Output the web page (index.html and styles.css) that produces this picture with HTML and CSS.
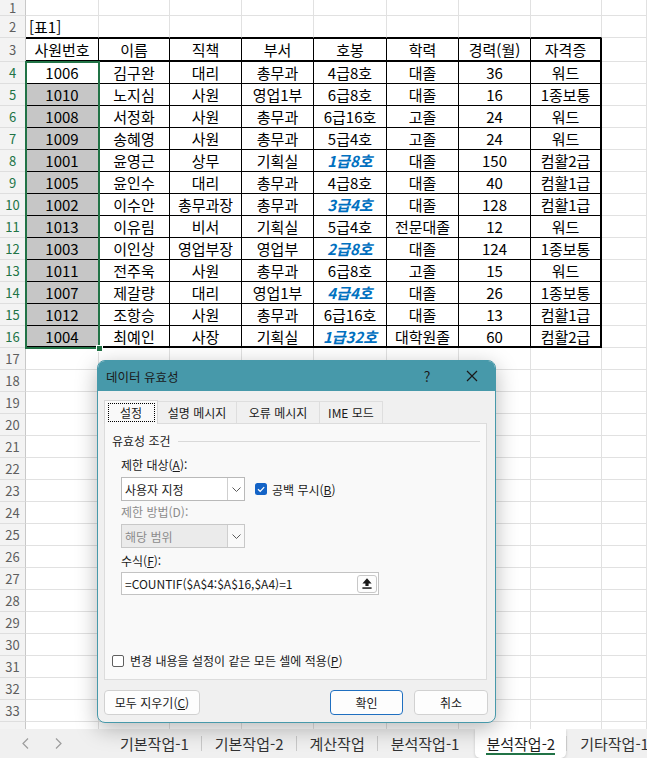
FILE: index.html
```html
<!DOCTYPE html>
<html lang="ko">
<head>
  <meta charset="UTF-8" />
  <meta name="viewport" content="width=device-width, initial-scale=1" />
  <title>데이터 유효성</title>
  <link rel="stylesheet" href="styles.css">
</head>
<body>

  <div class="sheet" id="sheet">
    <div class="selection"><span class="handle"></span></div>
  </div>

  <div class="tabbar">
    <div class="nav">
      <svg width="7" height="11" viewBox="0 0 7 11"><polyline points="6,0.5 1,5.5 6,10.5" /></svg>
      <svg width="7" height="11" viewBox="0 0 7 11"><polyline points="1,0.5 6,5.5 1,10.5" /></svg>
    </div>
    <div class="sheet-tabs">
      <span class="stab">기본작업-1</span>
      <i class="sep"></i>
      <span class="stab">기본작업-2</span>
      <i class="sep"></i>
      <span class="stab">계산작업</span>
      <i class="sep"></i>
      <span class="stab">분석작업-1</span>
      <span class="stab active"><span>분석작업-2</span></span>
      <i class="sep"></i>
      <span class="stab">기타작업-1</span>
    </div>
  </div>

  <div class="dialog">
    <div class="titlebar">
      <span class="title">데이터 유효성</span>
      <span class="help">?</span>
      <span class="close">
        <svg width="12" height="12" viewBox="0 0 12 12"><path d="M1 1 L11 11 M11 1 L1 11" /></svg>
      </span>
    </div>

    <div class="dlg-body">
      <div class="tabs">
        <div class="tab active"><span class="focus">설정</span></div>
        <div class="tab w2">설명 메시지</div>
        <div class="tab w3">오류 메시지</div>
        <div class="tab w4">IME 모드</div>
      </div>

      <div class="panel">
        <div class="group">
          <span>유효성 조건</span>
          <span class="rule"></span>
        </div>

        <div class="fields">
          <div class="label first">제한 대상(<u>A</u>):</div>
          <div class="field-row">
            <div class="combo">
              <span class="value">사용자 지정</span>
              <span class="drop">
                <svg width="9" height="5" viewBox="0 0 9 5"><polyline points="0.5,0.5 4.5,4.5 8.5,0.5" /></svg>
              </span>
            </div>
            <div class="check">
              <svg width="12" height="12" viewBox="0 0 12 12">
                <rect x="0" y="0" width="12" height="12" rx="2.5" fill="#1363c6" />
                <polyline points="3,6.3 5.2,8.4 9.2,4.1" fill="none" stroke="#fff" stroke-width="1.3" />
              </svg>
              <span>공백 무시(<u>B</u>)</span>
            </div>
          </div>

          <div class="label disabled">제한 방법(D):</div>
          <div class="combo off">
            <span class="value">해당 범위</span>
            <span class="drop">
              <svg width="9" height="5" viewBox="0 0 9 5"><polyline points="0.5,0.5 4.5,4.5 8.5,0.5" /></svg>
            </span>
          </div>

          <div class="label third">수식(<u>F</u>):</div>
          <div class="formula">
            <span class="value">=COUNTIF($A$4:$A$16,$A4)=1</span>
            <span class="ref-btn">
              <svg width="10" height="11" viewBox="0 0 10 11">
                <path d="M5 0.3 L9.6 5.4 H6.6 V8 H3.4 V5.4 H0.4 Z" fill="#1a1a1a" />
                <rect x="0.4" y="9.3" width="9.2" height="1.5" fill="#1a1a1a" />
              </svg>
            </span>
          </div>
        </div>

        <div class="apply">
          <span class="box"></span>
          <span>변경 내용을 설정이 같은 모든 셀에 적용(<u>P</u>)</span>
        </div>
      </div>

      <div class="buttons">
        <button class="btn clear">모두 지우기(<u>C</u>)</button>
        <button class="btn ok">확인</button>
        <button class="btn cancel">취소</button>
      </div>
    </div>
  </div>

  <script>
    const sheet = document.getElementById("sheet");
    const head = ["사원번호", "이름", "직책", "부서", "호봉", "학력", "경력(월)", "자격증"];
    const data = [
      ["1006", "김구완", "대리", "총무과", "4급8호", "대졸", "36", "워드"],
      ["1010", "노지심", "사원", "영업1부", "6급8호", "대졸", "16", "1종보통"],
      ["1008", "서정화", "사원", "총무과", "6급16호", "고졸", "24", "워드"],
      ["1009", "송혜영", "사원", "총무과", "5급4호", "고졸", "24", "워드"],
      ["1001", "윤영근", "상무", "기획실", "1급8호", "대졸", "150", "컴활2급"],
      ["1005", "윤인수", "대리", "총무과", "4급8호", "대졸", "40", "컴활1급"],
      ["1002", "이수안", "총무과장", "총무과", "3급4호", "대졸", "128", "컴활1급"],
      ["1013", "이유림", "비서", "기획실", "5급4호", "전문대졸", "12", "워드"],
      ["1003", "이인상", "영업부장", "영업부", "2급8호", "대졸", "124", "1종보통"],
      ["1011", "전주욱", "사원", "총무과", "6급8호", "고졸", "15", "워드"],
      ["1007", "제갈량", "대리", "영업1부", "4급4호", "대졸", "26", "1종보통"],
      ["1012", "조항승", "사원", "총무과", "6급16호", "대졸", "13", "컴활1급"],
      ["1004", "최예인", "사장", "기획실", "1급32호", "대학원졸", "60", "컴활2급"]
    ];
    const blueRows = [8, 10, 12, 14, 16];

    function addCell(cls, text) {
      const div = document.createElement("div");
      div.className = cls;
      div.textContent = text;
      sheet.appendChild(div);
    }

    // row 34 only peeks out under the sheet tabs, so no label
    for (let r = 1; r <= 34; r++) {
      addCell(r >= 4 && r <= 16 ? "rh on" : "rh", r < 34 ? r : "");

      for (let c = 0; c < 9; c++) {
        let cls = "c";
        let text = "";

        if (c < 8) {
          if (r === 2) {
            cls += " above";
            if (c === 0) {
              cls += " left";
              text = "[표1]";
            }
          }
          if (r === 3) {
            cls += " t th";
            text = head[c];
          }
          if (r >= 4 && r <= 16) {
            cls += " t";
            text = data[r - 4][c];
            if (c === 0 && r > 4) cls += " sel";
            if (c === 4 && blueRows.includes(r)) cls += " blue";
            if (r === 16) cls += " bottom";
          }
          if (c === 7 && r >= 3 && r <= 16) cls += " last";
        }

        addCell(cls, text);
      }
    }
  </script>
</body>
</html>
```

FILE: styles.css
```css
* {
  box-sizing: border-box;
}

body {
  margin: 0;
  width: 647px;
  height: 758px;
  overflow: hidden;
  font-family: "Noto Sans CJK KR", "Noto Sans", sans-serif;
  color: #000;
  background: #fff;
  position: relative;
}

/* ---- worksheet ---- */

.sheet {
  position: relative;
  height: 729px;
  overflow: hidden;
  display: grid;
  grid-template-columns: 26px 73px 71px 72px 72px 73px 72px 72px 71px 1fr;
  grid-template-rows: 16px 22px 24px repeat(31, 22px);
}

.c,
.rh {
  display: flex;
  align-items: center;
  justify-content: center;
  white-space: nowrap;
  line-height: 1;
}

.c {
  border-right: 1px solid #e1e1e1;
  border-bottom: 1px solid #e1e1e1;
  font-size: 15px;
  overflow: hidden;
}

.rh {
  background: #f3f3f3;
  border-right: 1px solid #c8c8c8;
  border-bottom: 1px solid #dedede;
  font-size: 13px;
  color: #5e5e5e;
}

.rh.on {
  color: #217346;
}

.c.left {
  justify-content: flex-start;
  padding-left: 3px;
}

.c.above {
  border-bottom-color: #000;
}

.c.t {
  border-right-color: #000;
  border-bottom-color: #000;
}

.c.th {
  border-top: 1px solid #000;
  border-bottom-width: 2px;
}

.c.last {
  border-right-width: 2px;
}

.c.bottom {
  border-bottom-width: 2px;
}

.c.sel {
  background: #c6c6c6;
}

.c.blue {
  color: #0070c0;
  font-weight: bold;
  font-style: italic;
}

.selection {
  position: absolute;
  left: 25px;
  top: 61px;
  width: 75px;
  height: 288px;
  border: 2px solid #217346;
  z-index: 2;
}

.handle {
  position: absolute;
  right: -5px;
  bottom: -5px;
  width: 7px;
  height: 7px;
  background: #217346;
  border: 1px solid #fff;
}

/* ---- sheet tabs ---- */

.tabbar {
  height: 29px;
  display: flex;
  overflow: hidden;
  background: #f0f0f0;
}

.nav {
  flex: none;
  width: 107px;
  display: flex;
  align-items: center;
  padding-left: 22px;
  gap: 26px;
}

.nav polyline {
  fill: none;
  stroke: #9c9c9c;
  stroke-width: 1.2;
}

.sheet-tabs {
  flex: none;
  display: flex;
  align-items: center;
  white-space: nowrap;
}

.stab {
  padding: 0 12px 0 13px;
  font-size: 15px;
  color: #333;
  line-height: 29px;
}

.stab.active {
  height: 29px;
  margin-left: 4px;
  padding: 0 11px;
  background: #fff;
  border-radius: 0 0 5px 5px;
  box-shadow: 0 1px 3px rgba(0, 0, 0, 0.18);
  display: flex;
  align-items: center;
}

.stab.active span {
  display: block;
  line-height: 18px;
  margin-top: 3px;
  border-bottom: 2px solid #217346;
  color: #1d1d1d;
}

.sep {
  width: 1px;
  height: 15px;
  background: #c9c9c9;
}

/* ---- dialog ---- */

.dialog {
  position: absolute;
  left: 97px;
  top: 360px;
  width: 399px;
  height: 363px;
  border: 1px solid #4799aa;
  border-radius: 8px;
  background: #f0f0f0;
  box-shadow: 0 6px 22px rgba(0, 0, 0, 0.28);
  overflow: hidden;
  font-size: 12px;
  color: #1a1a1a;
  z-index: 5;
}

.titlebar {
  height: 30px;
  background: #4799aa;
  display: flex;
  align-items: center;
  padding-left: 8px;
}

.title {
  font-size: 12.5px;
}

.help {
  margin-left: auto;
  width: 20px;
  margin-right: 12px;
  text-align: center;
  font-size: 14px;
}

.close {
  width: 46px;
  display: flex;
  justify-content: center;
}

.close path {
  stroke: #1a1a1a;
  stroke-width: 1.2;
}

.dlg-body {
  padding: 9px 7px 7px 6px;
}

.tabs {
  display: flex;
  align-items: flex-end;
  height: 23px;
}

.tab {
  width: 54px;
  height: 22px;
  border: 1px solid #dedede;
  border-bottom: none;
  margin-right: -1px;
  background: #f0f0f0;
  display: flex;
  align-items: center;
  justify-content: center;
  white-space: nowrap;
}

.tab.w2 { width: 80px; }
.tab.w3 { width: 84px; }
.tab.w4 { width: 64px; }

.tab.active {
  height: 24px;
  margin-bottom: -1px;
  background: #f9f9f9;
  border-color: #d6d6d6;
  position: relative;
  z-index: 1;
}

.focus {
  width: 47px;
  height: 19px;
  border: 1px dotted #000;
  display: flex;
  align-items: center;
  justify-content: center;
}

.panel {
  width: 383px;
  height: 257px;
  background: #f9f9f9;
  border: 1px solid #dcdcdc;
  padding: 9px 6px 10px 7px;
  display: flex;
  flex-direction: column;
}

.group {
  display: flex;
  align-items: center;
  gap: 7px;
  line-height: 16px;
}

.rule {
  flex: 1;
  height: 1px;
  background: #d9d9d9;
}

.fields {
  padding-left: 9px;
}

.label {
  line-height: 16px;
  margin: 3px 0 4px;
}

.label.first {
  margin-top: 8px;
}

.label.third {
  margin: 5px 0 3px;
}

.label.disabled {
  color: #8c8c8c;
}

.field-row {
  display: flex;
  align-items: center;
}

.combo {
  width: 124px;
  height: 24px;
  background: #fff;
  border: 1px solid #b9b9b9;
  display: flex;
  align-items: center;
}

.combo .value {
  flex: 1;
  padding-left: 3px;
}

.drop {
  width: 17px;
  height: 100%;
  border-left: 1px solid #cfcfcf;
  display: flex;
  align-items: center;
  justify-content: center;
  background: #fff;
}

.drop polyline {
  fill: none;
  stroke: #5a5a5a;
  stroke-width: 1;
}

.combo.off {
  background: #ebebeb;
  border-color: #c8c8c8;
  color: #8c8c8c;
}

.combo.off .drop {
  background: #f9f9f9;
}

.check {
  display: flex;
  align-items: center;
  gap: 5px;
  margin-left: 10px;
}

.formula {
  width: 258px;
  height: 23px;
  background: #fff;
  border: 1px solid #c3c3c3;
  display: flex;
  align-items: center;
}

.formula .value {
  flex: 1;
  padding-left: 3px;
}

.ref-btn {
  width: 20px;
  height: 18px;
  margin-right: 1px;
  border: 1px solid #c8c8c8;
  border-radius: 3px;
  background: #fdfdfd;
  display: flex;
  align-items: center;
  justify-content: center;
}

.apply {
  margin-top: auto;
  display: flex;
  align-items: center;
  gap: 6px;
  line-height: 16px;
}

.box {
  width: 12px;
  height: 12px;
  border: 1px solid #5f5f5f;
  border-radius: 2px;
  background: #fff;
}

.buttons {
  display: flex;
  margin-top: 10px;
}

.btn {
  height: 25px;
  padding: 0;
  border: 1px solid #d1d1d1;
  border-radius: 4px;
  background: #fdfdfd;
  font-family: inherit;
  font-size: 12px;
  color: #1a1a1a;
}

.btn.clear {
  width: 96px;
}

.btn.ok {
  width: 73px;
  margin-left: auto;
  border-color: #1f6fc0;
}

.btn.cancel {
  width: 74px;
  margin-left: 11px;
}
```
